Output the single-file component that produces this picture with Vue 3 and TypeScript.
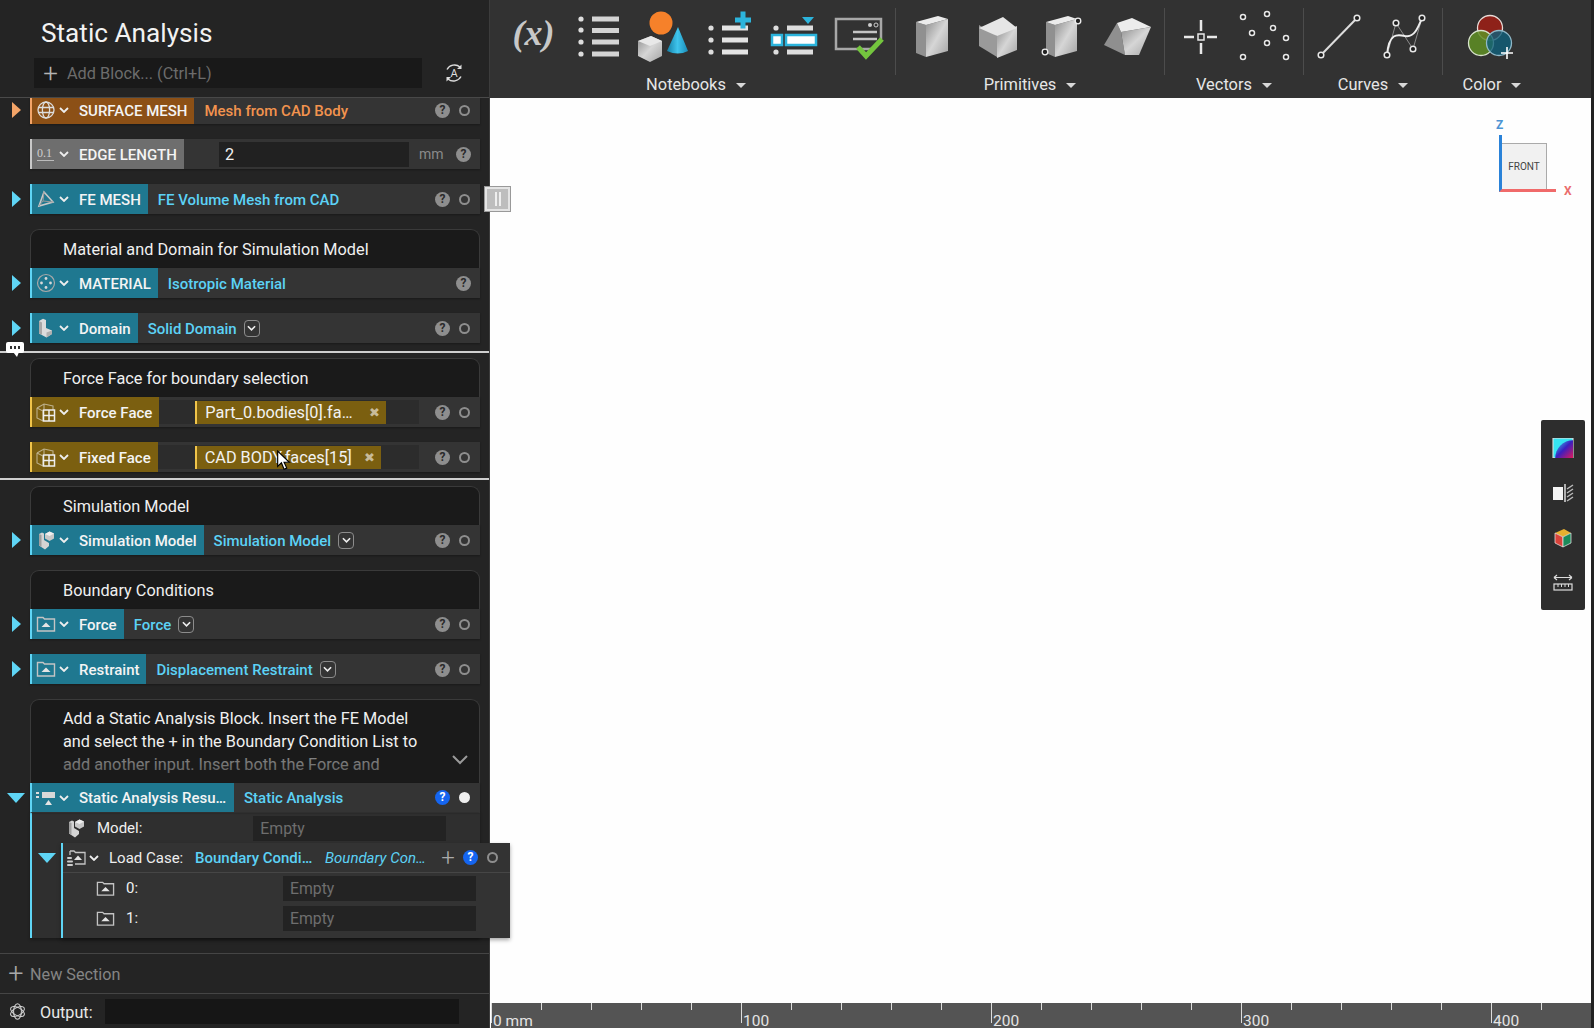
<script setup lang="ts">
type Tone = 'teal' | 'orange' | 'gray' | 'gold'
interface Block {
  note?: string
  label: string
  name?: string
  icon: string
  tone: Tone
  dropdown?: boolean
  noRing?: boolean
  chip?: string
  chipGap?: number
  chipWidth?: number
  field?: boolean
  gapClass?: string
}
const topBlocks: Block[] = [
  { label: 'SURFACE MESH', name: 'Mesh from CAD Body', icon: 'globe', tone: 'orange', gapClass: 'clip' },
  { label: 'EDGE LENGTH', icon: 'num', tone: 'gray', field: true, noRing: true },
  { label: 'FE MESH', name: 'FE Volume Mesh from CAD', icon: 'mesh', tone: 'teal' },
  { note: 'Material and Domain for Simulation Model', label: 'MATERIAL', name: 'Isotropic Material', icon: 'material', tone: 'teal', noRing: true },
  { label: 'Domain', name: 'Solid Domain', icon: 'solid', tone: 'teal', dropdown: true }
]
const faceBlocks: Block[] = [
  { note: 'Force Face for boundary selection', label: 'Force Face', icon: 'face', tone: 'gold', chip: 'Part_0.bodies[0].faces[14]', chipGap: 36, chipWidth: 191 },
  { label: 'Fixed Face', icon: 'face', tone: 'gold', chip: 'CAD BODY.faces[15]', chipGap: 37, chipWidth: 186 }
]
const bcBlocks: Block[] = [
  { note: 'Simulation Model', label: 'Simulation Model', name: 'Simulation Model', icon: 'sim', tone: 'teal', dropdown: true },
  { note: 'Boundary Conditions', label: 'Force', name: 'Force', icon: 'folder', tone: 'teal', dropdown: true },
  { label: 'Restraint', name: 'Displacement Restraint', icon: 'folder', tone: 'teal', dropdown: true }
]
const groups = [
  { label: 'Notebooks', icons: ['t-list', 't-shapes', 't-listadd', 't-listsel', 't-check'], formula: true },
  { label: 'Primitives', icons: ['t-box1', 't-box2', 't-box3', 't-box4'] },
  { label: 'Vectors', icons: ['t-point', 't-points'] },
  { label: 'Curves', icons: ['t-line', 't-curve'] },
  { label: 'Color', icons: ['t-color'], wide: true }
]
const rulerTicks = Array.from({ length: 22 }, (_, i) => ({
  major: i % 5 === 0,
  text: i === 0 ? '0 mm' : i % 5 === 0 ? String((i / 5) * 100) : ''
}))
const caseRows = ['0:', '1:']
</script>

<template>
  <div class="app">
    <svg class="defs" aria-hidden="true">
      <defs>
        <linearGradient id="g-box" x1="0" y1="0" x2="1" y2="1">
          <stop offset="0" stop-color="#8e8e8e" /><stop offset="0.5" stop-color="#d6d6d6" /><stop offset="1" stop-color="#a4a4a4" />
        </linearGradient>
        <linearGradient id="g-cone" x1="0" y1="0" x2="1" y2="0">
          <stop offset="0" stop-color="#137fa6" /><stop offset="0.5" stop-color="#3fc4ec" /><stop offset="1" stop-color="#1a8db8" />
        </linearGradient>
        <linearGradient id="g-map" x1="0" y1="0" x2="1" y2="1">
          <stop offset="0" stop-color="#35e0f0" /><stop offset="0.5" stop-color="#3a1fc0" /><stop offset="1" stop-color="#e0185a" />
        </linearGradient>
        <symbol id="i-globe" viewBox="0 0 20 20">
          <g fill="none" stroke="#ddd" stroke-width="1.3"><circle cx="10" cy="10" r="8" /><ellipse cx="10" cy="10" rx="3.6" ry="8" /><path d="M2.5 7.5h15M2.5 12.5h15" /></g>
        </symbol>
        <symbol id="i-num" viewBox="0 0 20 20">
          <text x="1" y="13" font-family="Liberation Serif, serif" font-size="12" fill="#cfcfcf">0.1</text><path d="M1 16.5h17" stroke="#bbb" stroke-width="1" />
        </symbol>
        <symbol id="i-mesh" viewBox="0 0 20 20">
          <path d="M8 3 L17 13 L3 17 Z" fill="none" stroke="#c8c8c8" stroke-width="1.6" /><path d="M8 3 L7 12 L3 17 M7 12 L17 13" fill="none" stroke="#999" stroke-width="1" />
        </symbol>
        <symbol id="i-material" viewBox="0 0 20 20">
          <circle cx="10" cy="10" r="8.5" fill="none" stroke="#a9a9a9" stroke-width="1.2" />
          <g fill="#d8d8d8"><circle cx="10" cy="5.5" r="1.4" /><circle cx="5.5" cy="10" r="1.4" /><circle cx="14.5" cy="10" r="1.4" /><circle cx="10" cy="14.5" r="1.4" /></g>
        </symbol>
        <symbol id="i-solid" viewBox="0 0 20 20">
          <path d="M3 3 L7 0.8 L10 2 V10 L16 12.5 V16 L10.5 19.5 L3 15.5 Z" fill="#dcdcdc" /><path d="M3 3 L6 4.5 V16.8 L3 15.5 Z" fill="#a8a8a8" /><path d="M10.5 19.5 V14.5 L16 12.5 V16 Z" fill="#b0b0b0" />
        </symbol>
        <symbol id="i-sim" viewBox="0 0 20 20">
          <path d="M3 4 L6 2.5 L8 3.5 V10 L13 13 V16 L9 19.5 L3 15.5 Z" fill="#d4d4d4" /><path d="M3 4 L5.5 5 V16.8 L3 15.5 Z" fill="#a0a0a0" />
          <path d="M9 4 L13.5 1.5 L18 3.5 V8.5 L13.5 11 L9 8.5 Z" fill="#c8c8c8" /><path d="M9 4 L13.5 6 L18 3.5 L13.5 1.5 Z" fill="#efefef" />
        </symbol>
        <symbol id="i-face" viewBox="0 0 20 20">
          <path d="M1 6 L8 2 L17 4 V8 M1 6 V16 L7 19 M1 6 L7 9 V19 M8 2 V7" fill="none" stroke="#bdb08a" stroke-width="1.1" />
          <rect x="7.5" y="8" width="11" height="11" fill="#7a5f10" stroke="#eee" stroke-width="1.5" /><path d="M13 8v11M7.5 13.5h11" stroke="#eee" stroke-width="1.5" />
        </symbol>
        <symbol id="i-folder" viewBox="0 0 20 20">
          <path d="M1.5 3.5 H7 L8.5 5 H18.5 V17 H1.5 Z" fill="none" stroke="#c4c4c4" stroke-width="1.4" /><path d="M10 8.5 L14.5 13 H5.5 Z" fill="#e4e4e4" />
        </symbol>
        <symbol id="i-static" viewBox="0 0 20 20">
          <rect x="6" y="4" width="13" height="6" fill="#d8d8d8" /><rect x="0" y="4" width="3" height="2" fill="#ddd" /><rect x="0" y="8" width="3" height="2" fill="#ddd" />
          <path d="M12.5 12 L16 17 H9 Z" fill="#e4e4e4" />
        </symbol>
        <symbol id="i-case" viewBox="0 0 20 20">
          <path d="M4 3 H8 L9.5 4.5 H19 V16 H9 M4 3 V7" fill="none" stroke="#c4c4c4" stroke-width="1.3" /><path d="M12 7.5 L16 12 H8 Z" fill="#e4e4e4" />
          <rect x="1" y="9" width="5" height="2" rx="1" fill="#ccc" /><rect x="1" y="12.5" width="6" height="2" rx="1" fill="#ccc" /><rect x="1" y="16" width="6" height="2" rx="1" fill="#ccc" />
        </symbol>
        <symbol id="t-list" viewBox="0 0 65 60">
          <g fill="#ddd"><circle cx="15" cy="11" r="2.6" /><circle cx="15" cy="22" r="2.6" /><circle cx="15" cy="34" r="2.6" /><circle cx="15" cy="46" r="2.6" /></g>
          <g fill="#d4d4d4"><rect x="26" y="8.5" width="27" height="5" /><rect x="26" y="20" width="27" height="5" /><rect x="26" y="31.5" width="27" height="5" /><rect x="26" y="43.5" width="27" height="5" /></g>
        </symbol>
        <symbol id="t-shapes" viewBox="0 0 65 60">
          <circle cx="30" cy="15" r="11.5" fill="#f6812a" />
          <path d="M7 33 L20 28 L31 33 V48 L19 54 L7 48 Z" fill="url(#g-box)" /><path d="M7 33 L19 38 L31 33 L20 28 Z" fill="#e8e8e8" />
          <path d="M47 19 L57 43 Q47 48 36 43 Z" fill="url(#g-cone)" />
        </symbol>
        <symbol id="t-listadd" viewBox="0 0 65 60">
          <g fill="#ddd"><circle cx="15" cy="20" r="2.6" /><circle cx="15" cy="32" r="2.6" /><circle cx="15" cy="44" r="2.6" /></g>
          <g fill="#e4e4e4"><rect x="26" y="17.5" width="26" height="5" /><rect x="26" y="29.5" width="26" height="5" /><rect x="26" y="41.5" width="26" height="5" /></g>
          <path d="M47 3.5v17M39 12h16" stroke="#2cb4dc" stroke-width="5" />
        </symbol>
        <symbol id="t-listsel" viewBox="0 0 65 60">
          <g fill="#ddd"><circle cx="15" cy="20" r="2.6" /><circle cx="15" cy="44" r="2.6" /></g>
          <g fill="#ddd"><rect x="26" y="17.5" width="26" height="5" /><rect x="26" y="41.5" width="26" height="5" /></g>
          <rect x="11" y="27" width="10" height="10" fill="#fff" stroke="#2cb4dc" stroke-width="2.5" /><rect x="25" y="27" width="30" height="10" fill="#fff" stroke="#2cb4dc" stroke-width="2.5" />
          <path d="M41 9 H53 L47 16 Z" fill="#2cb4dc" />
        </symbol>
        <symbol id="t-check" viewBox="0 0 65 60">
          <path d="M48 41 H10 V11 H55 V31" fill="none" stroke="#a8a8a8" stroke-width="2.5" />
          <circle cx="44" cy="17" r="2" fill="#ccc" /><circle cx="50" cy="17" r="2" fill="none" stroke="#ccc" />
          <path d="M27 24h24M27 31h24" stroke="#c4c4c4" stroke-width="2.5" />
          <path d="M32 39 L40 48 L56 31" fill="none" stroke="#74c53e" stroke-width="5" />
        </symbol>
        <symbol id="t-box1" viewBox="0 0 65 60">
          <path d="M16 14 L26 17 V49 L16 45 Z" fill="#909090" /><path d="M26 17 L48 11 V43 L26 49 Z" fill="url(#g-box)" /><path d="M16 14 L38 8 L48 11 L26 17 Z" fill="#ebebeb" />
        </symbol>
        <symbol id="t-box2" viewBox="0 0 65 60">
          <path d="M14 17 L32 28 V49 L14 38 Z" fill="#9a9a9a" /><path d="M32 26 L52 18 V42 L32 50 Z" fill="url(#g-box)" /><path d="M14 20 L38 9 L52 20 L32 28 Z" fill="#e6e6e6" />
        </symbol>
        <symbol id="t-box3" viewBox="0 0 65 60">
          <path d="M16 14 L25 17 V49 L16 45 Z" fill="#909090" /><path d="M25 17 L47 11 V43 L25 49 Z" fill="url(#g-box)" /><path d="M16 14 L38 8 L47 11 L25 17 Z" fill="#ebebeb" />
          <circle cx="48" cy="13" r="2.8" fill="#222" stroke="#eee" stroke-width="1.3" /><circle cx="15" cy="44" r="2.8" fill="#222" stroke="#eee" stroke-width="1.3" />
        </symbol>
        <symbol id="t-box4" viewBox="0 0 65 60">
          <path d="M22 15 L26 24 L30 47 L9 37 Z" fill="#8f8f8f" /><path d="M26 24 L56 19 L44 47 L30 47 Z" fill="url(#g-box)" /><path d="M22 15 L37 10 L56 19 L26 24 Z" fill="#ececec" />
        </symbol>
        <symbol id="t-point" viewBox="0 0 65 60">
          <rect x="29" y="26" width="6" height="6" fill="none" stroke="#e8e8e8" stroke-width="1.5" />
          <path d="M32 12v11M32 35v11M15 29h10M38 29h10" stroke="#e8e8e8" stroke-width="2.5" />
        </symbol>
        <symbol id="t-points" viewBox="0 0 65 60">
          <g fill="#1d1d1d" stroke="#e8e8e8" stroke-width="1.5">
            <circle cx="9" cy="9" r="2.5" /><circle cx="33" cy="6" r="2.5" /><circle cx="18" cy="25" r="2.5" /><circle cx="39" cy="20" r="2.5" />
            <circle cx="33" cy="35" r="2.5" /><circle cx="52" cy="30" r="2.5" /><circle cx="9" cy="49" r="2.5" /><circle cx="52" cy="49" r="2.5" />
          </g>
        </symbol>
        <symbol id="t-line" viewBox="0 0 65 60">
          <path d="M13 47 L49 10" stroke="#ddd" stroke-width="2" /><circle cx="13" cy="47" r="2.8" fill="#1d1d1d" stroke="#e8e8e8" stroke-width="1.5" /><circle cx="49" cy="10" r="2.8" fill="#1d1d1d" stroke="#e8e8e8" stroke-width="1.5" />
        </symbol>
        <symbol id="t-curve" viewBox="0 0 65 60">
          <path d="M14 47 L23 15 L40 41 L49 10" fill="none" stroke="#8a8a8a" stroke-width="1" />
          <path d="M14 47 C16 25 24 26 32 28 C41 30 45 20 49 10" fill="none" stroke="#eee" stroke-width="2" />
          <g fill="#1d1d1d" stroke="#e8e8e8" stroke-width="1.5"><circle cx="14" cy="47" r="2.8" /><circle cx="23" cy="15" r="2.8" /><circle cx="40" cy="41" r="2.8" /><circle cx="49" cy="10" r="2.8" /></g>
        </symbol>
        <symbol id="t-color" viewBox="0 0 90 60">
          <circle cx="43" cy="20" r="12.5" fill="#8e2119" stroke="#e8dcd8" stroke-width="1.3" />
          <circle cx="34" cy="35" r="12.5" fill="#5f8f25" fill-opacity=".85" stroke="#d8e4cc" stroke-width="1.3" />
          <circle cx="52" cy="35" r="12.5" fill="#0f5f7a" fill-opacity=".8" stroke="#8fb8c8" stroke-width="1.3" />
          <path d="M60 39v12M54 45h12" stroke="#fff" stroke-width="1.6" />
        </symbol>
      </defs>
    </svg>

    <aside class="side">
      <header class="head">
        <h1 class="title">Static Analysis</h1>
        <div class="add-line">
          <div class="add-box"><span class="plus">+</span><span>Add Block... (Ctrl+L)</span></div>
          <svg class="auto" viewBox="0 0 20 20"><path d="M3 6.5 A8.5 8.5 0 0 1 16 4 M17 13.5 A8.5 8.5 0 0 1 4 16" fill="none" stroke="#ddd" stroke-width="1.4" /><path d="M17.5 1.5v4.5h-4.5zM2.5 18.5v-4.5h4.5z" fill="#ddd" /><text x="10" y="14" text-anchor="middle" font-family="Roboto, sans-serif" font-size="11" fill="#ddd">A</text></svg>
        </div>
      </header>

      <div class="blocks">
        <template v-for="b in topBlocks" :key="b.label">
          <div class="item" :class="b.gapClass">
            <div v-if="b.note" class="line"><div class="note"><p>{{ b.note }}</p></div></div>
            <div class="line">
              <span v-if="!b.field" class="tri" :class="b.tone"></span>
              <div class="row">
                <div class="tab" :class="b.tone">
                  <svg class="ic"><use :href="'#i-' + b.icon" /></svg>
                  <svg class="chev" viewBox="0 0 10 6"><path d="M1 1 L5 5 L9 1" /></svg>
                  <span class="lab">{{ b.label }}</span>
                </div>
                <template v-if="b.field">
                  <div class="numfield">2</div>
                  <span class="unit">mm</span>
                </template>
                <span v-if="b.name" class="name" :class="b.tone">{{ b.name }}</span>
                <span v-if="b.dropdown" class="dd"><svg viewBox="0 0 10 6"><path d="M1 1 L5 5 L9 1" /></svg></span>
                <div class="acts" :class="{ solo: b.noRing }"><span class="help">?</span><span v-if="!b.noRing" class="ring"></span></div>
              </div>
            </div>
          </div>
        </template>

        <div class="divider first"></div>

        <div v-for="(b, fi) in faceBlocks" :key="b.label" class="item" :class="{ facefirst: fi === 0 }">
          <div v-if="b.note" class="line"><div class="note"><p>{{ b.note }}</p></div></div>
          <div class="line">
            <div class="row">
              <div class="tab gold">
                <svg class="ic"><use :href="'#i-' + b.icon" /></svg>
                <svg class="chev" viewBox="0 0 10 6"><path d="M1 1 L5 5 L9 1" /></svg>
                <span class="lab">{{ b.label }}</span>
              </div>
              <div class="chipzone">
                <div class="chip" :style="{ marginLeft: b.chipGap + 'px', width: b.chipWidth + 'px' }">
                  <span class="chiptext">{{ b.chip }}</span><span class="chipx">✖</span>
                </div>
              </div>
              <div class="acts"><span class="help">?</span><span class="ring"></span></div>
            </div>
          </div>
        </div>

        <div class="divider second"></div>

        <div v-for="(b, i) in bcBlocks" :key="b.note || b.label" class="item" :class="{ bcfirst: i === 0 }">
          <div v-if="b.note" class="line"><div class="note"><p>{{ b.note }}</p></div></div>
          <div class="line">
            <span class="tri teal"></span>
            <div class="row">
              <div class="tab teal">
                <svg class="ic"><use :href="'#i-' + b.icon" /></svg>
                <svg class="chev" viewBox="0 0 10 6"><path d="M1 1 L5 5 L9 1" /></svg>
                <span class="lab">{{ b.label }}</span>
              </div>
              <span class="name teal">{{ b.name }}</span>
              <span class="dd"><svg viewBox="0 0 10 6"><path d="M1 1 L5 5 L9 1" /></svg></span>
              <div class="acts"><span class="help">?</span><span class="ring"></span></div>
            </div>
          </div>
        </div>

        <div class="item">
          <div class="line">
            <div class="note tall">
              <p>Add a Static Analysis Block. Insert the FE Model and select the + in the Boundary Condition List to add another input. Insert both the Force and Restraint blocks into the list.</p>
              <svg class="note-chev" viewBox="0 0 16 10"><path d="M1 1 L8 8 L15 1" /></svg>
            </div>
          </div>
          <div class="line">
            <span class="tri-open"></span>
            <div class="row result-row">
              <div class="tab teal res-tab">
                <svg class="ic"><use href="#i-static" /></svg>
                <svg class="chev" viewBox="0 0 10 6"><path d="M1 1 L5 5 L9 1" /></svg>
                <span class="lab trunc">Static Analysis Results</span>
              </div>
              <span class="name teal">Static Analysis</span>
              <div class="acts"><span class="help on">?</span><span class="ring fill"></span></div>
            </div>
          </div>
          <div class="result">
            <div class="model">
              <svg class="ic model-ic"><use href="#i-sim" /></svg>
              <span class="model-lab">Model:</span>
              <div class="empty model-in">Empty</div>
            </div>
            <div class="case-wrap">
              <span class="tri-open inner"></span>
              <div class="case">
                <div class="case-head">
                  <svg class="ic"><use href="#i-case" /></svg>
                  <svg class="chev" viewBox="0 0 10 6"><path d="M1 1 L5 5 L9 1" /></svg>
                  <span class="case-lab">Load Case:</span>
                  <span class="case-name">Boundary Conditions</span>
                  <span class="case-type">Boundary Condition</span>
                  <span class="case-plus">+</span>
                  <span class="help on">?</span><span class="ring"></span>
                </div>
                <div v-for="r in caseRows" :key="r" class="case-row">
                  <svg class="ic small"><use href="#i-folder" /></svg>
                  <span class="case-idx">{{ r }}</span>
                  <div class="empty case-in">Empty</div>
                </div>
              </div>
            </div>
          </div>
        </div>
      </div>

      <div class="new-section"><span class="plus">+</span><span class="ns-lab">New Section</span></div>
      <div class="output">
        <svg class="atom" viewBox="0 0 20 20"><g fill="none" stroke="#d4d4d4" stroke-width="1.2"><ellipse cx="10" cy="10" rx="9" ry="4.6" transform="rotate(30 10 10)" /><ellipse cx="10" cy="10" rx="9" ry="4.6" transform="rotate(90 10 10)" /><ellipse cx="10" cy="10" rx="9" ry="4.6" transform="rotate(150 10 10)" /></g></svg>
        <span class="out-lab">Output:</span>
        <div class="out-box"></div>
      </div>

      <div class="bubble"><i></i><i></i><i></i></div>
      <div class="handle"><i></i><i></i></div>
      <svg class="cursor" viewBox="0 0 12 18"><path d="M1 1 V14 L4.2 11 L6.5 16.5 L8.8 15.5 L6.5 10.5 H11 Z" fill="#fff" stroke="#000" stroke-width="1" /></svg>
    </aside>

    <main class="main">
      <div class="toolbar">
        <template v-for="(g, gi) in groups" :key="g.label">
          <span v-if="gi > 0" class="sep"></span>
          <section class="group">
            <div class="icons">
              <div v-if="g.formula" class="cell formula">(x)</div>
              <svg v-for="ic in g.icons" :key="ic" class="cell" :class="{ wide: g.wide }"><use :href="'#' + ic" /></svg>
            </div>
            <div class="gl"><span>{{ g.label }}</span><i class="caret"></i></div>
          </section>
        </template>
      </div>

      <div class="view">
        <div class="gizmo">
          <span class="axis-z">Z</span>
          <div class="cube">FRONT</div>
          <span class="axis-x">X</span>
        </div>
        <div class="palette">
          <svg viewBox="0 0 18 18"><rect width="18" height="18" fill="#36e4f2" stroke="#ddd" /><path d="M18 2 A16 16 0 0 0 2 18 H18 Z" fill="url(#g-map)" /></svg>
          <svg viewBox="0 0 22 20"><rect x="1" y="4" width="10" height="13" fill="#f4f4f4" /><path d="M13 1v18" stroke="#ddd" stroke-width="1.5" /><path d="M15 6 l6 -4 M15 10 l6 -4 M15 14 l6 -4 M15 18 l6 -4" stroke="#bbb" stroke-width="1.5" /></svg>
          <svg viewBox="0 0 20 20"><path d="M2 5 L11 1 L18 5 L10 9 Z" fill="#e8b030" /><path d="M2 5 L10 9 V19 L2 15 Z" fill="#d8423a" stroke="#eee" stroke-width=".7" /><path d="M10 9 L18 5 V15 L10 19 Z" fill="#1b8a5a" stroke="#eee" stroke-width=".7" /></svg>
          <svg viewBox="0 0 20 20"><path d="M1 4.5h18M1 4.5l3-2.5M1 4.5l3 2.5M19 4.5l-3-2.5M19 4.5l-3 2.5" fill="none" stroke="#ddd" stroke-width="1.2" /><rect x="1" y="11" width="18" height="6" fill="none" stroke="#ddd" stroke-width="1.2" /><path d="M5 11v3M8.5 11v3M12 11v3M15.5 11v3" stroke="#ddd" /></svg>
        </div>
      </div>

      <div class="ruler">
        <div v-for="(t, i) in rulerTicks" :key="i" class="tick" :class="{ major: t.major }"><span v-if="t.text">{{ t.text }}</span></div>
      </div>
    </main>
    <div class="edge"></div>
  </div>
</template>

<style>
html, body { margin: 0; height: 100%; overflow: hidden; background: #fefefe; }
</style>

<style scoped>
.app { display: flex; width: 100%; height: 100vh; font-family: Roboto, "Noto Sans", sans-serif; color: #f0f0f0; }
.defs { position: absolute; width: 0; height: 0; }
.side { position: relative; z-index: 2; flex: 0 0 490px; box-sizing: border-box; border-right: 1px solid #3c3c3c; background: #242424; display: flex; flex-direction: column; }
.head { height: 98px; box-sizing: border-box; border-bottom: 1px solid #4a4a4a; }
.title { margin: 0; padding: 16px 0 0 41px; font-size: 26.2px; line-height: 34px; font-weight: 400; color: #f2f2f2; }
.add-line { display: flex; align-items: center; margin-top: 8px; padding-left: 34px; }
.add-box { width: 388px; height: 30px; background: #191919; display: flex; align-items: center; font-size: 16.3px; color: #6c6c6c; }
.plus { font-size: 26px; font-weight: 300; line-height: 26px; color: #b4b4b4; width: 33px; text-align: center; }
.auto { width: 20px; height: 20px; margin-left: 22px; }

.blocks { flex: 1; display: flex; flex-direction: column; }
.item { margin-top: 15px; }
.item.clip { margin-top: 0; }
.item.clip .row { height: 26px; }
.clip .lab, .clip .name, .clip .acts, .clip .ic, .clip .chev, .clip .tri { transform: translateY(-1px); }
.item.facefirst { margin-top: 0; }
.bcfirst { margin-top: 6px; }
.line { display: flex; align-items: center; padding-left: 30px; position: relative; }
.row { flex: 0 0 450px; height: 30px; display: flex; align-items: center; background: #343434; box-shadow: 0 1px 2px rgba(0,0,0,.3); }
.tri { position: absolute; left: 12px; top: 50%; margin-top: -8px; width: 0; height: 0; border-left: 9px solid #5fd5f5; border-top: 8px solid transparent; border-bottom: 8px solid transparent; }
.tri.orange { border-left-color: #f3a468; }
.tri-open { position: absolute; left: 7px; top: 50%; margin-top: -5px; width: 0; height: 0; border-top: 10px solid #5fd5f5; border-left: 9px solid transparent; border-right: 9px solid transparent; }
.tri-open.inner { left: 6px; top: 10px; margin-top: 0; }

.tab { height: 100%; box-sizing: border-box; border-left: 2px solid #5fd5f5; padding: 0 7px 0 4px; display: flex; align-items: center; flex: none; font-size: 15px; font-weight: 500; color: #f4f4f4; background: #1f7890; }
.tab.orange { background: #8c5016; border-left-color: #f3a468; }
.tab.gray { background: #6e6e6e; border-left-color: #c8c8c8; }
.tab.gold { background: #7b5f10; border-left-color: #f0c44a; }
.tab.res-tab { padding-right: 6px; }
.ic { width: 20px; height: 20px; flex: none; }
.chev { width: 10px; height: 6px; margin-left: 3px; flex: none; }
.chev path, .dd path, .note-chev path { fill: none; stroke: #eee; stroke-width: 1.8; }
.lab { margin-left: 10px; padding-top: 1px; white-space: nowrap; }
.lab.trunc { width: 149px; overflow: hidden; text-overflow: ellipsis; }
.name { margin-left: 10px; padding-top: 1px; font-size: 15px; font-weight: 500; white-space: nowrap; }
.name.teal { color: #5cd2f6; }
.name.orange { color: #f2934e; }
.dd { width: 14px; height: 15px; margin-left: 7px; border: 1.5px solid #8c8c8c; border-radius: 4px; display: flex; align-items: center; justify-content: center; }
.dd svg { width: 9px; height: 6px; }
.acts { margin-left: auto; display: flex; align-items: center; gap: 8.5px; padding-right: 10.5px; }
.acts.solo { padding-right: 9px; }
.help { width: 15px; height: 15px; border-radius: 50%; background: #8e8e8e; color: #2a2a2a; font-size: 12px; font-weight: 700; line-height: 15px; text-align: center; display: inline-block; flex: none; }
.help.on { background: #1565f0; color: #fff; }
.ring { width: 7px; height: 7px; border: 2.5px solid #8e8e8e; border-radius: 50%; display: inline-block; flex: none; }
.ring.fill { background: #efefef; border-color: #efefef; }
.numfield { width: 184px; margin-left: 35px; padding-left: 6px; padding-top: 1px; box-sizing: content-box; height: 24px; background: #212121; line-height: 24px; font-size: 16.3px; color: #f0f0f0; }
.unit { margin-left: 10px; font-size: 14px; color: #8a8a8a; }

.note { position: relative; box-sizing: border-box; width: 450px; height: 39px; background: #1a1a1a; border-top: 1px solid #3a3a3a; border-left: 1px solid #3a3a3a; border-right: 1px solid #3a3a3a; border-radius: 9px 9px 0 0; overflow: hidden; }
.note p { margin: 0; padding: 8px 0 0 32px; font-size: 16.3px; line-height: 23px; color: #f0f0f0; }
.note.tall { height: 84px; }
.note.tall p { padding: 7px 55px 0 32px; }
.note.tall::after { content: ""; position: absolute; left: 0; right: 0; bottom: 0; height: 31px; background: linear-gradient(rgba(26,26,26,.45), rgba(26,26,26,.68) 74%, rgba(26,26,26,1) 78%); }
.note-chev { position: absolute; right: 11px; bottom: 18px; width: 16px; height: 10px; z-index: 1; }
.note-chev path { stroke: #9a9a9a; stroke-width: 2; }

.divider { height: 2px; background: #cfcfcf; }
.divider.first { margin-top: 8px; margin-bottom: 5px; }
.divider.second { margin-top: 6px; }
.chipzone { align-self: stretch; flex: 1; margin: 3px 0; background: #2c2c2c; display: flex; align-items: center; }
.chip { box-sizing: border-box; height: 23px; background: #7b5f10; border-left: 2px solid #f0c44a; display: flex; align-items: center; padding: 0 4px 0 8px; font-size: 16.3px; color: #f2f2f2; }
.chiptext { flex: none; max-width: 148px; overflow: hidden; white-space: nowrap; text-overflow: ellipsis; }
.chipx { margin-left: auto; font-size: 13px; color: #c8bb9a; width: 13px; line-height: 13px; }
.chipzone + .acts { margin-left: 0; width: 61px; box-sizing: border-box; justify-content: flex-end; }

.result-row { height: 29px; }
.result { width: 450px; margin-left: 30px; box-sizing: border-box; border-left: 2px solid #5fd5f5; background: #2f2f2f; height: 126px; border-top: 1px solid #3c3c3c; box-shadow: 0 2px 3px rgba(0,0,0,.3); }
.model { height: 30px; display: flex; align-items: center; }
.model-ic { margin-left: 34px; }
.model-lab { margin-left: 11px; font-size: 15px; font-weight: 400; }
.empty { background: #232323; color: #6e6e6e; font-size: 15.8px; height: 25px; line-height: 25px; padding-left: 7px; box-sizing: border-box; width: 193px; }
.model-in { margin-left: 111px; }
.case-wrap { position: relative; padding-left: 29px; }
.case { position: relative; width: 449px; height: 95px; box-sizing: border-box; border-left: 2px solid #5fd5f5; background: #333; box-shadow: 0 2px 4px rgba(0,0,0,.35); }
.case-head { height: 29px; display: flex; align-items: center; border-bottom: 1px solid #464646; padding-left: 3px; font-size: 15px; }
.case-lab { margin-left: 10px; width: 86px; color: #eee; white-space: nowrap; }
.case-name { width: 120px; margin-right: 10px; color: #5cd2f6; font-weight: 500; overflow: hidden; white-space: nowrap; text-overflow: ellipsis; }
.case-type { width: 102px; color: #5cd2f6; font-style: italic; overflow: hidden; white-space: nowrap; text-overflow: ellipsis; }
.case-plus { margin-left: 13px; width: 16px; text-align: center; font-size: 24px; line-height: 24px; font-weight: 300; color: #aaa; }
.case-head .help { margin-left: 7px; }
.case-head .ring { margin-left: 8.5px; }
.case-row { height: 30px; display: flex; align-items: center; }
.ic.small { margin-left: 33px; width: 19px; height: 19px; }
.case-idx { margin-left: 11px; width: 157px; font-size: 15px; }

.new-section { height: 40px; box-sizing: border-box; border-top: 1px solid #454545; display: flex; align-items: center; font-size: 16.2px; color: #858585; }
.new-section .plus { width: 16px; margin-left: 8px; margin-right: 6px; font-size: 27px; color: #a8a8a8; }
.ns-lab { padding-top: 2px; }
.output { height: 35px; box-sizing: border-box; border-top: 1px solid #454545; display: flex; align-items: center; }
.atom { width: 17px; height: 17px; margin-left: 9px; }
.out-lab { margin-left: 14px; padding-top: 2px; font-size: 16.2px; color: #e8e8e8; width: 65px; }
.out-box { width: 354px; height: 25px; background: #161616; }

.bubble { position: absolute; left: 6px; top: 342px; width: 18px; height: 11px; background: #fff; border-radius: 2px; display: flex; align-items: center; justify-content: center; gap: 1.5px; }
.bubble::after { content: ""; position: absolute; left: 7px; bottom: -4px; border-top: 5px solid #fff; border-left: 4px solid transparent; border-right: 2px solid transparent; }
.bubble i { width: 2.5px; height: 2.5px; background: #333; }
.handle { position: absolute; left: 485px; top: 187px; width: 25px; height: 24px; box-sizing: border-box; background: #bdbdbd; border: 2px solid #e4e4e4; outline: 1px solid #999; display: flex; align-items: center; justify-content: center; gap: 2px; }
.handle i { width: 2px; height: 14px; background: #eee; }
.cursor { position: absolute; left: 276px; top: 450px; width: 15px; height: 21px; z-index: 3; }

.main { flex: 1; min-width: 0; display: flex; flex-direction: column; background: #fefefe; }
.toolbar { height: 98px; box-sizing: border-box; background: #323232; display: flex; padding-left: 11px; }
.group { padding-top: 8px; }
.sep { width: 1px; height: 67px; margin: 8px 4px 0 4px; background: #4c4c4c; }
.icons { display: flex; }
.cell { width: 65px; height: 60px; flex: none; }
.cell.wide { width: 90px; }
.formula { font-family: "Liberation Serif", serif; font-style: italic; font-weight: 700; font-size: 36px; line-height: 50px; text-align: center; color: #c8c8c8; }
.gl { display: flex; align-items: center; justify-content: center; gap: 10px; margin-top: 7px; font-size: 16.4px; line-height: 20px; color: #e6e6e6; }
.caret { width: 0; height: 0; border-top: 5px solid #d8d8d8; border-left: 5px solid transparent; border-right: 5px solid transparent; }

.view { position: relative; flex: 1; }
.gizmo { position: absolute; left: 1006px; top: 18px; width: 90px; height: 88px; }
.cube { position: absolute; left: 3px; top: 27px; width: 48px; height: 49px; box-sizing: border-box; background: #f1f1f1; border: 1.5px solid #aaa; border-left-color: #2a82d8; border-bottom-color: #f06a6a; border-left-width: 3px; border-bottom-width: 3px; font-size: 10px; line-height: 45px; text-align: center; color: #444; }
.cube::before { content: ""; position: absolute; left: -3px; top: -9px; width: 3px; height: 9px; background: #2a82d8; }
.cube::after { content: ""; position: absolute; right: -10px; bottom: -3px; width: 10px; height: 3px; background: #f06a6a; }
.axis-z { position: absolute; left: 0; top: 2px; font-size: 12px; font-weight: 700; color: #4d94d4; }
.axis-x { position: absolute; left: 68px; top: 68px; font-size: 12px; font-weight: 700; color: #ea6d6d; }
.palette { position: absolute; left: 1051px; top: 322px; width: 44px; height: 190px; background: #2d2d2d; border-radius: 2px; display: flex; flex-direction: column; align-items: center; padding-top: 18px; box-sizing: border-box; gap: 25px; }
.palette svg { width: 22px; height: 20px; }

.ruler { height: 25px; margin-left: 1px; background: #545454; display: flex; overflow: hidden; }
.tick { flex: 0 0 50px; box-sizing: border-box; height: 7px; overflow: visible; position: relative; }
.tick::before { content: ""; position: absolute; left: 0; top: 0; width: 1px; height: 7px; background: #dcdcdc; }
.tick.major::before { height: 20px; }
.tick span { position: absolute; left: 2px; top: 9px; font-size: 15.5px; line-height: 18px; color: #e4e4e4; white-space: nowrap; }
.edge { flex: 0 0 3px; background: #222; }
</style>
